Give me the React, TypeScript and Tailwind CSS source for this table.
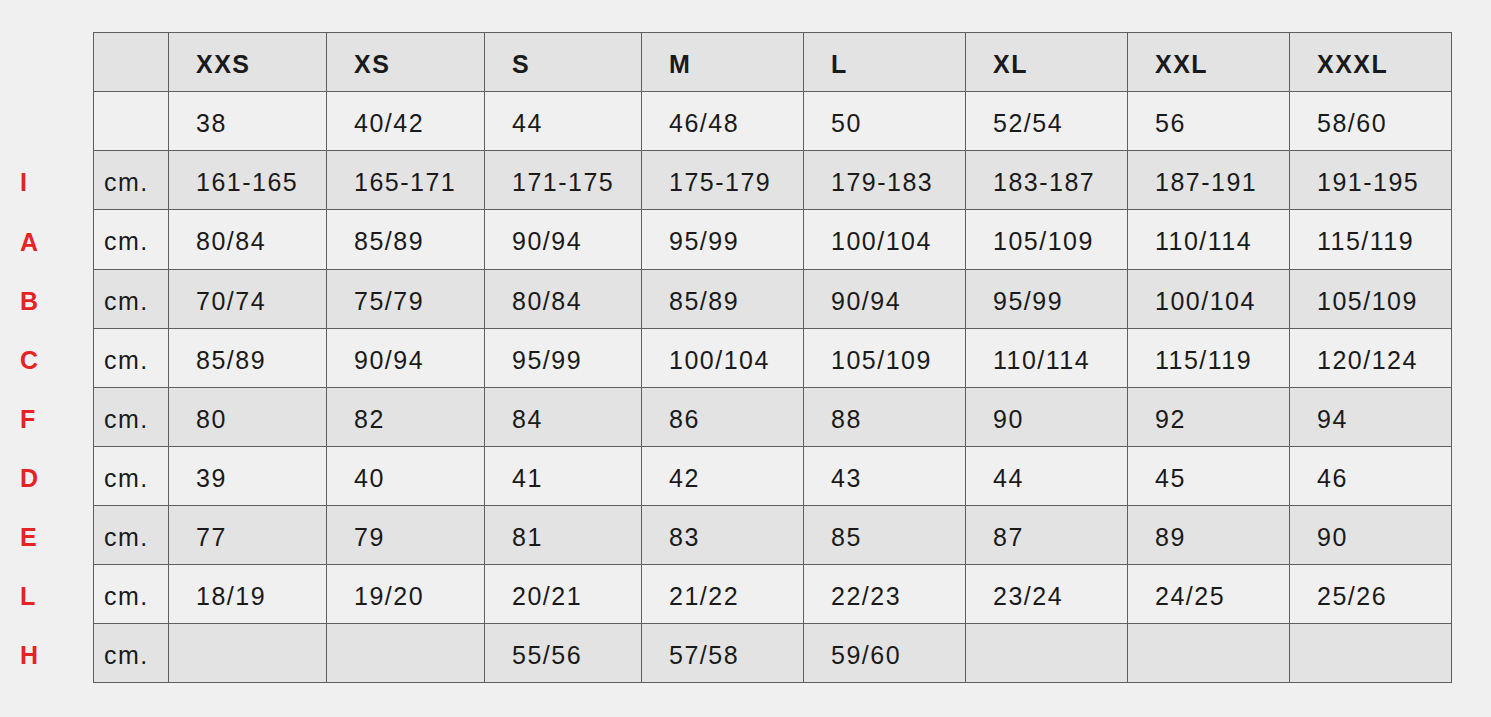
const sizes = ["XXS", "XS", "S", "M", "L", "XL", "XXL", "XXXL"];
const widths = ["w-[158px]", "w-[158px]", "w-[157px]", "w-[162px]", "w-[162px]", "w-[162px]", "w-[162px]", "w-[162px]"];

const rows: { label: string; unit: string; values: string[] }[] = [
  { label: "", unit: "", values: ["38", "40/42", "44", "46/48", "50", "52/54", "56", "58/60"] },
  { label: "I", unit: "cm.", values: ["161-165", "165-171", "171-175", "175-179", "179-183", "183-187", "187-191", "191-195"] },
  { label: "A", unit: "cm.", values: ["80/84", "85/89", "90/94", "95/99", "100/104", "105/109", "110/114", "115/119"] },
  { label: "B", unit: "cm.", values: ["70/74", "75/79", "80/84", "85/89", "90/94", "95/99", "100/104", "105/109"] },
  { label: "C", unit: "cm.", values: ["85/89", "90/94", "95/99", "100/104", "105/109", "110/114", "115/119", "120/124"] },
  { label: "F", unit: "cm.", values: ["80", "82", "84", "86", "88", "90", "92", "94"] },
  { label: "D", unit: "cm.", values: ["39", "40", "41", "42", "43", "44", "45", "46"] },
  { label: "E", unit: "cm.", values: ["77", "79", "81", "83", "85", "87", "89", "90"] },
  { label: "L", unit: "cm.", values: ["18/19", "19/20", "20/21", "21/22", "22/23", "23/24", "24/25", "25/26"] },
  { label: "H", unit: "cm.", values: ["", "", "55/56", "57/58", "59/60", "", "", ""] },
];

function Row({ label, unit, cells, dark, first, bold, tall }: { label: string; unit: string; cells: string[]; dark: boolean; first?: boolean; bold?: boolean; tall?: boolean }) {
  const bg = dark ? "bg-[#e3e3e3]" : "bg-[#f0f0f0]";
  return (
    <div className={`flex ${tall ? "h-[60px]" : "h-[59px]"}`}>
      <div className="w-[93px] shrink-0 flex items-center pl-5 pt-[4px] font-bold text-[#e52323]">{label}</div>
      <div className={`w-[76px] shrink-0 flex items-center pl-[10px] pt-[4px] border-l border-r border-b border-[#5f5f5f] ${first ? "border-t" : ""} ${bg}`}>
        {unit}
      </div>
      {cells.map((v, i) => (
        <div
          key={i}
          className={`${widths[i]} shrink-0 flex items-center pl-[27px] pt-[4px] border-r border-b border-[#5f5f5f] ${first ? "border-t" : ""} ${bg} ${bold ? "font-bold" : ""}`}
        >
          {v}
        </div>
      ))}
    </div>
  );
}

export default function App() {
  return (
    <div
      className="w-full h-[717px] bg-[#f0f0f0] pt-[32px] text-[25px] tracking-[1.5px] text-[#1a1a1a] leading-none"
      style={{ fontFamily: '"Liberation Sans", Arial, sans-serif' }}
    >
      <div className="flex flex-col">
        <Row label="" unit="" cells={sizes} dark first bold tall />
        {rows.map((r, i) => (
          <Row key={i} label={r.label} unit={r.unit} cells={r.values} dark={i % 2 === 1} tall={r.label === "A"} />
        ))}
      </div>
    </div>
  );
}
